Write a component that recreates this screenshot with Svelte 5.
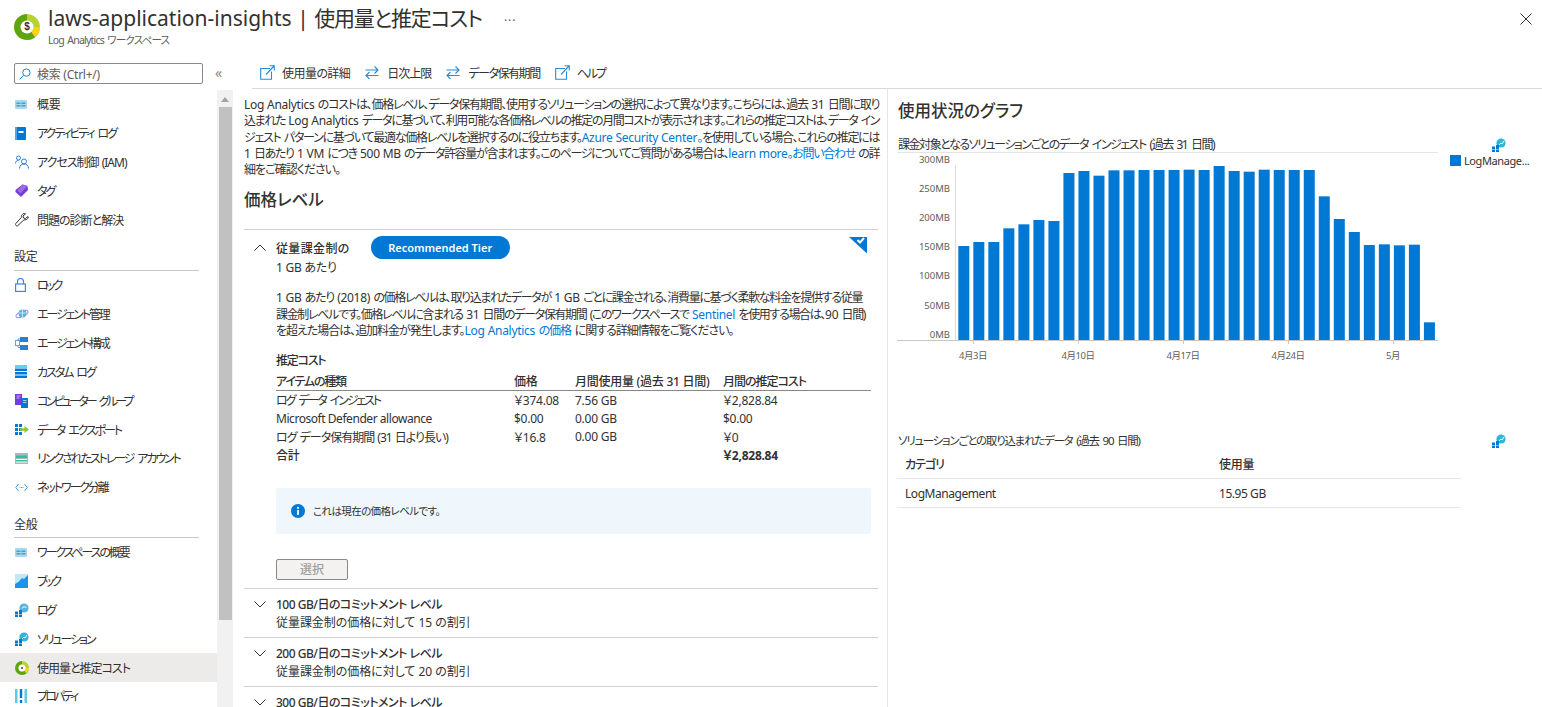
<script>
  const group0 = [
    ['overview', '概要', 'ls0'], ['book', 'アクティビティ ログ', 'ls2'], ['people', 'アクセス制御 (IAM)', 'ls1'], ['tag', 'タグ', 'ls2'], ['wrench', '問題の診断と解決', 'ls1']
  ];
  const group1 = [
    ['lock', 'ロック', 'ls3'], ['globe', 'エージェント管理', 'ls2'], ['config', 'エージェント構成', 'ls2'], ['table', 'カスタム ログ', 'ls2'],
    ['servers', 'コンピューター グループ', 'ls3'], ['export', 'データ エクスポート', 'ls2'], ['storage', 'リンクされたストレージ アカウント', 'ls2'], ['network', 'ネットワーク分離', 'ls2']
  ];
  const group2 = [
    ['overview', 'ワークスペースの概要', 'ls2'], ['workbook', 'ブック', 'ls3'], ['cloud', 'ログ', 'ls3'], ['cloud2', 'ソリューション', 'ls2'],
    ['cost', '使用量と推定コスト', 'ls1', true], ['props', 'プロパティ', 'ls3']
  ];
  const tops = [348,336,336,295,283,270,273,129,123,137,121,121,120,120,120,119,120,108,123,125,119,120,120,120,199,267,306,345,343,346,344,577];
  const bars = tops.map((t, i) => ({ x: 958.3 + i * 15.02, y: 130 + t / 3, h: (630 - t) / 3 }));
  const yLabels = [['300MB',159],['250MB',188],['200MB',217],['150MB',246],['100MB',275],['50MB',305],['0MB',334]];
  const xLabels = [['4月3日',973],['4月10日',1078],['4月17日',1183],['4月24日',1288],['5月',1393]];
  const rows = [
    ['ログ データ インジェスト', '￥374.08', '7.56 GB', '￥2,828.84', 'ls2'],
    ['Microsoft Defender allowance', '$0.00', '0.00 GB', '$0.00', 'lsh'],
    ['ログ データ保有期間 (31 日より長い)', '￥16.8', '0.00 GB', '￥0', 'ls1']
  ];
  const tiers = [
    ['100 GB/日のコミットメント レベル', '従量課金制の価格に対して 15 の割引'],
    ['200 GB/日のコミットメント レベル', '従量課金制の価格に対して 20 の割引'],
    ['300 GB/日のコミットメント レベル', '従量課金制の価格に対して 22 の割引']
  ];
</script>

{#snippet logo(size)}
  <svg width={size} height={size} viewBox="0 0 26 26" class="noshrink">
    <path d="M13 0A13 13 0 0 0 13 26A13 13 0 0 0 24.6 18.9L18.4 15.7A6 6 0 1 1 13 7Z" fill="#5ea60f"/>
    <path d="M13 0A13 13 0 0 1 24.6 18.9L18.4 15.7A6 6 0 0 0 13 7Z" fill="#b7d332"/>
    <path d="M26 13A13 13 0 0 1 21 23.3L17.2 17.7A6 6 0 0 0 19 13Z" fill="#fcd116"/>
    <circle cx="13" cy="13" r="6.5" fill="#fff"/>
    {#if size > 20}<text x="13" y="16.4" class="dollar" text-anchor="middle">$</text>{:else}<circle cx="13" cy="13" r="2" fill="#555"/>{/if}
  </svg>
{/snippet}

{#snippet cloudIcon(chart)}
  <svg width="14" height="14" viewBox="0 0 14 14" class="noshrink">
    <circle cx="9" cy="5" r="4.6" fill={chart ? '#2fb5de' : '#59b4d9'}/>
    <path d="M6 5.5h6.5v2.5H6z" fill={chart ? '#2fb5de' : '#59b4d9'}/>
    {#if chart}<path d="M7 7l2-2 1 1 2-3" stroke="#fff" fill="none" stroke-width="1"/>{:else}<path d="M7 5.5c1-2 3-2 4.500-1" stroke="#fff" fill="none"/>{/if}
    <path d="M0 8.500h3v2.500H0zM4 7h3v4H4zM0 11.500h3V14H0zM4 11.500h3V14H4z" fill="#0078d4"/>
  </svg>
{/snippet}

{#snippet icon(k)}
  {#if k === 'overview'}
    <svg width="12" height="9" viewBox="0 0 12 9"><rect width="12" height="9" rx="1" fill="#a9d8ef"/><path d="M1.500 2.500h4v1.500h-4zM6.500 2.500h4v1.500h-4zM1.500 5h4v1.500h-4zM6.500 5h4v1.500h-4z" fill="#4a9bd0"/></svg>
  {:else if k === 'book'}
    <svg width="11" height="13" viewBox="0 0 11 13"><rect width="11" height="13" rx="1" fill="#0078d4"/><rect x="0" width="2" height="13" fill="#50a5e6"/><rect x="3.500" y="4" width="5" height="2" fill="#fff"/></svg>
  {:else if k === 'people'}
    <svg width="14" height="14" viewBox="0 0 14 14" fill="none" stroke="#2a7fd0" stroke-width="1"><circle cx="3.500" cy="3" r="2"/><circle cx="9" cy="6.500" r="2.500"/><path d="M.5 8.500c0-2 1-3 3-3M4.500 13.500c0-3 2-4.500 4.500-4.500s4.500 1.500 4.500 4.500"/></svg>
  {:else if k === 'tag'}
    <svg width="13" height="13" viewBox="0 0 13 13"><path d="M7.500.5l5 1.500.5 4-7 7L.5 8 .5 6z" fill="#773adc"/><path d="M7.500.5l5 1.500-7 7.500-3-3z" fill="#9a6de0"/></svg>
  {:else if k === 'wrench'}
    <svg width="14" height="14" viewBox="0 0 14 14" fill="none" stroke="#323130" stroke-width="1"><path d="M13 3.500l-2.500 2-2-.5-.5-2L10.500.8C8.500 0 6 1.500 6.300 4.500L.8 10.500c-.6.8-.5 1.400.2 2s1.300.7 2-.1l6-5.600c2.800.5 4.800-1.500 4-3.300z"/></svg>
  {:else if k === 'lock'}
    <svg width="11" height="14" viewBox="0 0 11 14" fill="none" stroke="#3f86e0" stroke-width="1.200"><rect x=".6" y="6" width="9.800" height="7.400"/><path d="M2.500 6V3.500a3 3 0 0 1 6 0V6"/></svg>
  {:else if k === 'globe'}
    <svg width="14" height="12" viewBox="0 0 14 12"><ellipse cx="7" cy="6" rx="6.500" ry="2.500" transform="rotate(-25 7 6)" fill="none" stroke="#a98ae0"/><circle cx="7.500" cy="5.500" r="4" fill="#59b4d9"/><path d="M4 5h7M7.500 1.500v8" stroke="#fff" stroke-width=".6"/></svg>
  {:else if k === 'config'}
    <svg width="13" height="13" viewBox="0 0 13 13"><rect x="5" y="0" width="8" height="5" fill="#2a7fd0"/><rect x="5" y="8" width="8" height="5" fill="#2a7fd0"/><rect x=".5" y="3.500" width="4" height="5" fill="#fff" stroke="#59a5e6"/><path d="M3 3.500V2h2M3 8.500V10.500h2" stroke="#59a5e6" fill="none"/></svg>
  {:else if k === 'table'}
    <svg width="12" height="13" viewBox="0 0 12 13"><rect width="12" height="3" fill="#5fd4ee"/><path d="M0 3.500h12v2.500H0zM0 7h12v2.500H0zM0 10.500h12V13H0z" fill="#0078d4"/></svg>
  {:else if k === 'servers'}
    <svg width="13" height="14" viewBox="0 0 13 14"><rect width="7" height="11" fill="#773adc"/><rect x="6" y="4" width="7" height="10" fill="#0078d4"/><path d="M1.500 2h4M1.500 4h3M8 6.500h3.500M8 8.500h3.500" stroke="#ddd" stroke-width=".8"/></svg>
  {:else if k === 'export'}
    <svg width="14" height="11" viewBox="0 0 14 11"><path d="M0 0h3v3H0zM4 0h3v3H4zM0 4h3v3H0zM4 4h3v3H4zM0 8h3v3H0zM4 8h3v3H4z" fill="#0078d4"/><path d="M5 4.200h4.500V2l4.500 3.500-4.500 3.500V6.800H5z" fill="#8cc63f"/></svg>
  {:else if k === 'storage'}
    <svg width="13" height="11" viewBox="0 0 13 11"><rect width="13" height="11" fill="#a8b9b9"/><rect x="1" y="2.500" width="11" height="2.500" fill="#2fbf9f"/><rect x="1" y="6" width="11" height="3.500" fill="#fff"/><rect x="1" y="7" width="11" height="1.500" fill="#2fbf9f"/></svg>
  {:else if k === 'network'}
    <svg width="13" height="9" viewBox="0 0 13 9" fill="none"><path d="M3.500 1L.8 4.500 3.500 8M9.500 1l2.700 3.500L9.500 8" stroke="#3aa0dc"/><path d="M4.500 4.500h1M6 4.500h1M7.500 4.500h1" stroke="#7fba00"/></svg>
  {:else if k === 'workbook'}
    <svg width="13" height="14" viewBox="0 0 13 14"><rect width="13" height="14" fill="#1b93eb"/><path d="M0 0h13v1L9 5 7 4 3.500 8 0 10z" fill="#bfe6fa"/></svg>
  {:else if k === 'cloud'}
    {@render cloudIcon(false)}
  {:else if k === 'cloud2'}
    {@render cloudIcon(true)}
  {:else if k === 'cost'}
    {@render logo(14)}
  {:else if k === 'props'}
    <svg width="12" height="14" viewBox="0 0 12 14"><path d="M0 0h2.500v14H0zM9.500 0H12v14H9.500z" fill="#5fc8ee"/><path d="M4.800 0h2.400v9H4.800zM4.800 11h2.400v3H4.800z" fill="#0078d4"/></svg>
  {/if}
{/snippet}

{#snippet navItem(item)}
  <div class="nav-item" class:selected={item[3]}>
    <span class="nav-icon">{@render icon(item[0])}</span>
    <span class={item[2]}>{item[1]}</span>
  </div>
{/snippet}

{#snippet extIcon()}
  <svg width="15" height="15" viewBox="0 0 15 15" fill="none" stroke="#2b88d8" stroke-width="1.100" class="noshrink"><path d="M10 3.500H.7v10.800h10.800V6.500"/><path d="M6 9.500L14 1M9.500 .7h4.800v4.800"/></svg>
{/snippet}
{#snippet swapIcon()}
  <svg width="14" height="13" viewBox="0 0 14 13" fill="none" stroke="#2b88d8" stroke-width="1.100" class="noshrink"><path d="M.5 4h12.500M9.500.5L13 4 9.500 7.500M13.500 9.500H1M4.500 6L1 9.500 4.500 13"/></svg>
{/snippet}
{#snippet chevron(up)}
  <svg width="12" height="7" viewBox="0 0 12 7" fill="none" stroke="#323130" class="chev"><path d={up ? 'M.5 6.500L6 1l5.500 5.500' : 'M.5.5L6 6 11.500.5'}/></svg>
{/snippet}

<div class="app">
  <header class="header">
    <span class="logo">{@render logo(26)}</span>
    <div class="titles">
      <h1>laws-application-insights | <span class="h1jp">使用量と推定コスト</span></h1>
      <div class="subtitle">Log Analytics ワークスペース</div>
    </div>
    <span class="more">···</span>
    <svg class="close" width="12" height="12" viewBox="0 0 12 12" stroke="#323130" fill="none"><path d="M.5.5l11 11M11.500.5l-11 11"/></svg>
  </header>

  <div class="body">
    <aside class="side">
      <div class="search-row">
        <div class="search">
          <svg width="12" height="12" viewBox="0 0 13 13" fill="none" stroke="#0078d4"><circle cx="8" cy="5" r="4"/><path d="M5 8L.7 12.300"/></svg>
          <span>検索 (Ctrl+/)</span>
        </div>
        <span class="collapse">«</span>
      </div>
      <div class="side-scroll">
        <nav class="nav">
          {#each group0 as item}{@render navItem(item)}{/each}
          <div class="group g1">設定</div>
          {#each group1 as item}{@render navItem(item)}{/each}
          <div class="group g2">全般</div>
          {#each group2 as item}{@render navItem(item)}{/each}
        </nav>
        <div class="scrollbar">
          <svg class="arrow" width="8" height="5" viewBox="0 0 8 5"><path d="M4 0l4 5H0z" fill="#a3a3a3"/></svg>
          <div class="thumb"></div>
        </div>
      </div>
    </aside>

    <div class="main">
      <div class="cmd">
        <div class="cmd-item gap7">{@render extIcon()}<span>使用量の詳細</span></div>
        <div class="cmd-item gap8">{@render swapIcon()}<span class="cmd2">日次上限</span></div>
        <div class="cmd-item gap8">{@render swapIcon()}<span class="cmd3">データ保有期間</span></div>
        <div class="cmd-item gap7">{@render extIcon()}<span class="ls2">ヘルプ</span></div>
      </div>
      <div class="panes">
        <section class="left">
          <p class="intro">
            <span><i>Log Analytics</i> のコストは、価格レベル、データ保有期間、使用するソリューションの選択によって異なります。こちらには、過去 <i>31</i> 日間に取り</span>
            <span>込まれた <i>Log Analytics</i> データに基づいて、利用可能な各価格レベルの推定の月間コストが表示されます。これらの推定コストは、データ イン</span>
            <span>ジェスト パターンに基づいて最適な価格レベルを選択するのに役立ちます。<a href="#a"><i>Azure Security Center</i>。</a>を使用している場合、これらの推定には</span>
            <span><i>1</i> 日あたり <i>1 VM</i> につき <i>500 MB</i> のデータ許容量が含まれます。このページについてご質問がある場合は、<a href="#a"><i>learn more</i>。</a><a href="#a">お問い合わせ</a> の詳</span>
            <span class="last">細をご確認ください。</span>
          </p>
          <h2>価格レベル</h2>

          <div class="tier open">
            <div class="tier-head">
              {@render chevron(true)}
              <strong class="lsw">従量課金制の</strong>
              <span class="pill">Recommended Tier</span>
              <svg class="ribbon" width="19" height="17" viewBox="0 0 19 17"><path d="M0 0h18v16.500z" fill="#0078d4"/><path d="M8.500 3l2.500 2.500L15 1" stroke="#fff" stroke-width="2" fill="none"/></svg>
            </div>
            <div class="tier-body">
              <div class="per">1 GB あたり</div>
              <p class="desc">
                <span class="d1"><i>1 GB</i> あたり <i>(2018)</i> の価格レベルは、取り込まれたデータが <i>1 GB</i> ごとに課金される、消費量に基づく柔軟な料金を提供する従量</span>
                <span class="d2">課金制レベルです。価格レベルに含まれる <i>31</i> 日間のデータ保有期間 (このワークスペースで <a href="#a"><i>Sentinel</i></a> を使用する場合は、<i>90</i> 日間)</span>
                <span class="d3">を超えた場合は、追加料金が発生します。<a href="#a"><i>Log Analytics</i> の価格</a> に関する詳細情報をご覧ください。</span>
              </p>
              <div class="est ls1b">推定コスト</div>
              <div class="cost-table">
                <div class="tr th"><span class="ls1b">アイテムの種類</span><span>価格</span><span>月間使用量 (過去 31 日間)</span><span class="ls1">月間の推定コスト</span></div>
                {#each rows as r}
                  <div class="tr"><span class={r[4]}>{r[0]}</span><span>{r[1]}</span><span>{r[2]}</span><span>{r[3]}</span></div>
                {/each}
                <div class="tr total"><span>合計</span><span></span><span></span><span>￥2,828.84</span></div>
              </div>
              <div class="info">
                <svg width="14" height="14" viewBox="0 0 14 14"><circle cx="7" cy="7" r="7" fill="#0078d4"/><rect x="6.100" y="6" width="1.800" height="5" fill="#fff"/><rect x="6.100" y="3" width="1.800" height="1.800" fill="#fff"/></svg>
                <span>これは現在の価格レベルです。</span>
              </div>
              <button class="select" disabled>選択</button>
            </div>
          </div>

          {#each tiers as t}
            <div class="tier closed">
              {@render chevron(false)}
              <div class="closed-text">
                <strong class="ls05">{t[0]}</strong>
                <div class="lsp">{t[1]}</div>
              </div>
            </div>
          {/each}
        </section>

        <section class="right">
          <h2 class="usage">使用状況のグラフ</h2>
          <div class="title-row first">
            <span>課金対象となるソリューションごとのデータ インジェスト (過去 31 日間)</span>
            <span class="pin">{@render cloudIcon(true)}</span>
          </div>
          <svg class="chart" width="654" height="270" viewBox="888 152 654 270">
            <line x1="897" x2="1438" y1="152.500" y2="152.500" stroke="#e5e5e5"/>
            <line x1="955.500" x2="955.500" y1="165" y2="340" stroke="#dcdcdc"/>
            {#each bars as b}
              <rect x={b.x} y={b.y} width="11" height={b.h} fill="#0078d4"/>
            {/each}
            <line x1="897" x2="1438" y1="340.500" y2="340.500" stroke="#c8c8c8"/>
            {#each yLabels as l}
              <text x="950" y={l[1] + 3.500} text-anchor="end" class="ax">{l[0]}</text>
            {/each}
            {#each xLabels as l}
              <line x1={l[1] + .5} x2={l[1] + .5} y1="341" y2="344" stroke="#c8c8c8"/>
              <text x={l[1]} y="359" text-anchor="middle" class="ax axx">{l[0]}</text>
            {/each}
            <rect x="1450" y="155" width="11" height="11" fill="#0078d4"/>
            <text x="1464" y="164.500" class="legend">LogManage...</text>
          </svg>
          <div class="title-row second">
            <span>ソリューションごとの取り込まれたデータ (過去 90 日間)</span>
            <span class="pin">{@render cloudIcon(true)}</span>
          </div>
          <div class="usage-table">
            <div class="ur uh"><span class="ls1">カテゴリ</span><span>使用量</span></div>
            <div class="ur"><span class="lsh">LogManagement</span><span class="lsh">15.95 GB</span></div>
          </div>
        </section>
      </div>
    </div>
  </div>
</div>

<style>
  :global(body) { margin: 0; background: #fff; }
  .app {
    width: 1542px; height: 707px; overflow: hidden; display: flex; flex-direction: column;
    font-family: "Noto Sans", "Noto Sans CJK JP", sans-serif; font-size: 12px; color: #323130;
    font-feature-settings: "palt"; letter-spacing: -0.25px;
  }
  .noshrink { flex-shrink: 0; display: block; }
  .dollar { font: bold 10px "Liberation Sans", sans-serif; fill: #333; }
  p, h1, h2 { margin: 0; }
  a { color: #0078d4; text-decoration: none; }
  i { font-style: normal; letter-spacing: -0.3px; word-spacing: 0; }
  .ls0 { letter-spacing: -0.25px; }
  .lsh { letter-spacing: -0.45px; }
  .ls05 { letter-spacing: -0.5px; }
  .ls1 { letter-spacing: -1px; word-spacing: 1px; }
  .ls1b { letter-spacing: -1.2px; }
  .ls2 { letter-spacing: -2.1px; word-spacing: 3px; }
  .ls3 { letter-spacing: -2.8px; word-spacing: 3.500px; }
  .lsw { letter-spacing: 0.35px; }
  .lsp { letter-spacing: -0.05px; }

  .header { height: 55px; display: flex; align-items: flex-start; position: relative; flex-shrink: 0; }
  .logo { margin: 14px 8px 0 14px; }
  .titles { padding-top: 4px; }
  h1 { font-size: 21px; font-weight: 400; line-height: 28px; letter-spacing: 0; white-space: nowrap; }
  .h1jp { letter-spacing: -1.2px; }
  .subtitle { font-size: 10.500px; color: #605e5c; line-height: 14px; margin-top: 1px; letter-spacing: -0.8px; word-spacing: 1.500px; }
  .more { margin: 12px 0 0 22px; font-size: 12px; color: #605e5c; letter-spacing: 1px; }
  .close { position: absolute; right: 10px; top: 13px; }

  .body { flex: 1; display: flex; min-height: 0; }
  .side { width: 233px; display: flex; flex-direction: column; flex-shrink: 0; }
  .search-row { height: 35px; display: flex; align-items: flex-start; padding: 8px 0 0 14px; box-sizing: border-box; flex-shrink: 0; }
  .search {
    width: 189px; height: 21px; box-sizing: border-box; border: 1px solid #8a8886; border-radius: 2px;
    display: flex; align-items: center; gap: 6px; padding-left: 4px; color: #605e5c; white-space: nowrap;
  }
  .collapse { margin: 1px 0 0 12px; color: #8a8886; font-size: 14px; line-height: 18px; }
  .side-scroll { flex: 1; display: flex; min-height: 0; }
  .nav { width: 217px; overflow: hidden; }
  .nav-item { height: 28.850px; display: flex; align-items: center; white-space: nowrap; }
  .nav-item.selected { background: #edebe9; }
  .nav-icon { width: 37px; padding-left: 15px; box-sizing: border-box; display: flex; flex-shrink: 0; }
  .nav-icon svg { display: block; }
  .group {
    margin-left: 14px; width: 185px; box-sizing: border-box; border-bottom: 1px solid #c8c6c4;
    display: flex; align-items: flex-end; line-height: 16px; font-size: 12px;
  }
  .g1 { height: 36.750px; padding-bottom: 5px; }
  .g2 { height: 36px; padding-bottom: 4px; }
  .scrollbar { width: 16px; background: #f1f1f1; position: relative; display: flex; flex-direction: column; align-items: center; }
  .arrow { margin-top: 7px; }
  .thumb { width: 13px; height: 513px; background: #c1c1c1; margin-top: 5px; }

  .main { flex: 1; min-width: 0; display: flex; flex-direction: column; }
  .cmd { height: 34px; margin-left: 19px; border-bottom: 1px solid #d9d9d9; box-sizing: border-box; display: flex; gap: 15px; padding: 0 0 0 8px; flex-shrink: 0; align-items: flex-start; letter-spacing: -0.55px; }
  .cmd-item { display: flex; align-items: center; white-space: nowrap; height: 17px; margin-top: 9px; }
  .cmd2 { letter-spacing: -1px; }
  .cmd3 { letter-spacing: -1.45px; }
  .gap7 { gap: 7px; }
  .gap8 { gap: 8px; }
  .panes { flex: 1; min-height: 0; display: flex; }
  .left { width: 655px; box-sizing: border-box; border-right: 1px solid #e6e6e6; padding: 8px 9px 0 11px; overflow: hidden; flex-shrink: 0; }
  .intro, .desc { letter-spacing: -1.45px; word-spacing: 1.500px; }
  .intro { line-height: 16.250px; }
  .intro span, .desc span { display: block; text-align: justify; text-align-last: justify; }
  .intro span { width: 635px; }
  .intro span.last { text-align-last: left; letter-spacing: -1px; }
  .d1 { width: 586px; }
  .d2 { width: 589px; }
  .d3 { width: 457px; }
  h2 { font-size: 16.500px; font-weight: 500; line-height: 22px; margin-top: 11px; letter-spacing: 0; }
  .tier { border-top: 1px solid #d2d0ce; }
  .tier.open { margin-top: 18px; position: relative; padding-bottom: 8px; }
  .tier-head { display: flex; align-items: center; height: 23px; margin-top: 6px; padding-left: 10px; }
  .chev { flex-shrink: 0; margin-right: 10px; }
  strong { font-weight: 500; }
  .pill { margin-left: 21px; width: 139px; height: 23px; border-radius: 12px; background: #0078d4; color: #fff; font-weight: 600; font-size: 11px; display: flex; align-items: center; justify-content: center; letter-spacing: 0; }
  .ribbon { position: absolute; left: 605px; top: 7px; }
  .tier-body { padding-left: 32px; margin-right: 7px; }
  .per { line-height: 16px; margin-top: 1px; }
  .desc { line-height: 16.500px; margin-top: 14px; }
  .est { margin-top: 13px; line-height: 16px; font-weight: 500; }
  .cost-table { margin-top: 3px; }
  .tr { display: grid; grid-template-columns: 238px 61px 148px 1fr; height: 18.300px; align-items: center; white-space: nowrap; }
  .th { height: 18px; border-bottom: 1px solid #8a8886; font-weight: 500; margin-bottom: 0.500px; }
  .total { height: 9px; font-weight: 700; }
  .total span:first-child { font-weight: 500; }
  .info { margin-top: 32.500px; height: 46px; background: #eff6fc; display: flex; align-items: center; gap: 8px; padding-left: 15px; font-size: 10.500px; letter-spacing: -0.6px; border-radius: 2px; color: #323130; }
  .select { margin-top: 25px; display: block; width: 72px; height: 21px; background: #f3f2f1; border: 1px solid #8a8886; border-radius: 2px; color: #a19f9d; font: inherit; font-weight: 500; padding: 0; }
  .tier.closed { height: 49px; box-sizing: border-box; display: flex; padding: 7px 0 0 10px; align-items: flex-start; }
  .tier.closed .chev { margin-top: 5px; }
  .closed-text { line-height: 18px; white-space: nowrap; }

  .right { flex: 1; padding: 11px 0 0 10px; min-width: 0; }
  .usage { margin: 0; line-height: 22px; }
  .title-row { height: 16px; margin-top: 15px; line-height: 16px; position: relative; white-space: nowrap; }
  .first { letter-spacing: -1.45px; word-spacing: 2px; height: 15px; }
  .pin { position: absolute; left: 594px; top: 1px; }
  .chart { display: block; margin-left: -10px; }
  .ax { font-size: 9.500px; fill: #605e5c; letter-spacing: 0; }
  .axx { letter-spacing: -0.5px; }
  .legend { font-size: 11px; fill: #323130; letter-spacing: -0.4px; }
  .second { margin-top: 11px; font-size: 11.500px; letter-spacing: -1.25px; word-spacing: 2px; }
  .usage-table { width: 564px; margin-left: -1px; }
  .ur { display: grid; grid-template-columns: 314px 1fr; padding-left: 8px; align-items: center; height: 29px; border-bottom: 1px solid #e6e6e6; box-sizing: border-box; }
  .uh { height: 30px; font-weight: 500; }
</style>
